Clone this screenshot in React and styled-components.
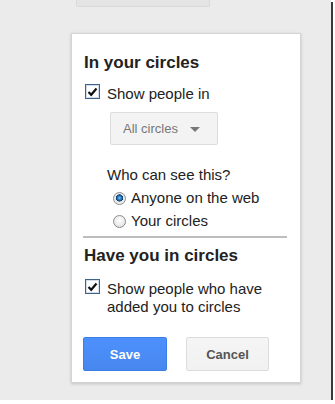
import React from "react"
import styled, { createGlobalStyle } from "styled-components"

const GlobalStyle = createGlobalStyle`
  body {
    margin: 0;
    background: #fff;
    font-family: "Liberation Sans", Arial, sans-serif;
  }
`

const Window = styled.div`
  width: 331px;
  height: 400px;
  background: #ebebeb;
  box-shadow: 2px 2px 0 #3a3a3a;
  display: flex;
  flex-direction: column;
  overflow: hidden;
`

const TopButton = styled.div`
  margin-left: 76px;
  width: 132px;
  height: 6px;
  background: #e4e4e4;
  border: 1px solid #d9d9d9;
  border-top: none;
  border-radius: 0 0 2px 2px;
`

const Panel = styled.div`
  box-sizing: border-box;
  margin: 26px 0 0 71px;
  width: 230px;
  height: 350px;
  padding: 19px 13px 0 12px;
  background: #fff;
  border: 1px solid #d4d4d4;
  box-shadow: 0 1px 3px rgba(0, 0, 0, 0.18);
  display: flex;
  flex-direction: column;
  color: #222;
`

const Heading = styled.h3`
  margin: ${(p) => p.$top || 0}px 0 0 0;
  font: normal 700 17px/20px "Liberation Sans", Arial, sans-serif;
  color: #222;
`

const CheckRow = styled.label`
  display: flex;
  align-items: flex-start;
  gap: 7px;
  margin-top: ${(p) => p.$top}px;
  padding-left: 1px;
`

const Box = styled.span`
  box-sizing: border-box;
  flex: none;
  width: 15px;
  height: 15px;
  margin-top: -1px;
  border: 1px solid #3e6388;
  box-shadow: inset 0 0 0 1px #d3dde8;
  background: #fff;
  display: flex;
  align-items: center;
  justify-content: center;
`

const Text = styled.span`
  font: normal 400 15px/18px "Liberation Sans", Arial, sans-serif;
  color: #222;
`

const Dropdown = styled.div`
  box-sizing: border-box;
  margin: 9px 0 0 26px;
  width: 108px;
  height: 33px;
  padding-left: 12px;
  display: flex;
  align-items: center;
  gap: 12px;
  background: #f3f3f3;
  border: 1px solid #dcdcdc;
  border-radius: 2px;
  font: normal 400 13px "Liberation Sans", Arial, sans-serif;
  color: #777;
`

const Arrow = styled.span`
  width: 0;
  height: 0;
  margin-top: 1px;
  border-left: 5px solid transparent;
  border-right: 5px solid transparent;
  border-top: 5px solid #777;
`

const Question = styled(Text)`
  display: block;
  margin: 21px 0 0 23px;
`

const RadioList = styled.div`
  display: flex;
  flex-direction: column;
  gap: 5px;
  margin: 5px 0 0 29px;
`

const RadioRow = styled.label`
  display: flex;
  align-items: center;
  gap: 5px;
  height: 18px;
`

const Radio = styled.span`
  box-sizing: border-box;
  flex: none;
  width: 13px;
  height: 13px;
  margin-top: 1px;
  border-radius: 50%;
  border: 1px solid #8c8c8c;
  background: ${(p) =>
    p.$checked
      ? "radial-gradient(circle at 50% 45%, #7cc4f4 0, #1f6fb5 2.2px, #0d3d6e 3.4px, #e8e8e8 3.8px, #f6f6f6 100%)"
      : "radial-gradient(circle at 50% 40%, #ffffff 0, #ececec 55%, #d0d0d0 100%)"};
`

const Divider = styled.div`
  margin: 6px 0 0 -1px;
  height: 2px;
  background: #bdbdbd;
`

const ButtonRow = styled.div`
  display: flex;
  gap: 19px;
  margin: 21px 0 0 -1px;
`

const Button = styled.button`
  box-sizing: border-box;
  width: ${(p) => p.$w}px;
  height: 34px;
  border-radius: 2px;
  font: normal 700 13px "Liberation Sans", Arial, sans-serif;
  cursor: pointer;
  color: ${(p) => (p.$primary ? "#fff" : "#555")};
  background: ${(p) =>
    p.$primary
      ? "linear-gradient(#4d90fe, #4787ed)"
      : "linear-gradient(#f5f5f5, #f1f1f1)"};
  border: 1px solid ${(p) => (p.$primary ? "#3a7ee8" : "#dcdcdc")};
`

const Check = () => (
  <svg width="11" height="10" viewBox="0 0 11 10">
    <path d="M1.5 5 L4.2 7.8 L9.5 1.5" fill="none" stroke="#111" strokeWidth="2.2" />
  </svg>
)

const App = () => {
  return (
    <>
      <GlobalStyle />
      <Window>
        <TopButton />
        <Panel>
          <Heading>In your circles</Heading>
          <CheckRow $top={12}>
            <Box>
              <Check />
            </Box>
            <Text>Show people in</Text>
          </CheckRow>
          <Dropdown>
            All circles
            <Arrow />
          </Dropdown>
          <Question>Who can see this?</Question>
          <RadioList>
            <RadioRow>
              <Radio $checked />
              <Text>Anyone on the web</Text>
            </RadioRow>
            <RadioRow>
              <Radio />
              <Text>Your circles</Text>
            </RadioRow>
          </RadioList>
          <Divider />
          <Heading $top={8}>Have you in circles</Heading>
          <CheckRow $top={14}>
            <Box>
              <Check />
            </Box>
            <Text>Show people who have added you to circles</Text>
          </CheckRow>
          <ButtonRow>
            <Button $primary $w={84}>Save</Button>
            <Button $w={83}>Cancel</Button>
          </ButtonRow>
        </Panel>
      </Window>
    </>
  )
}

export default App
